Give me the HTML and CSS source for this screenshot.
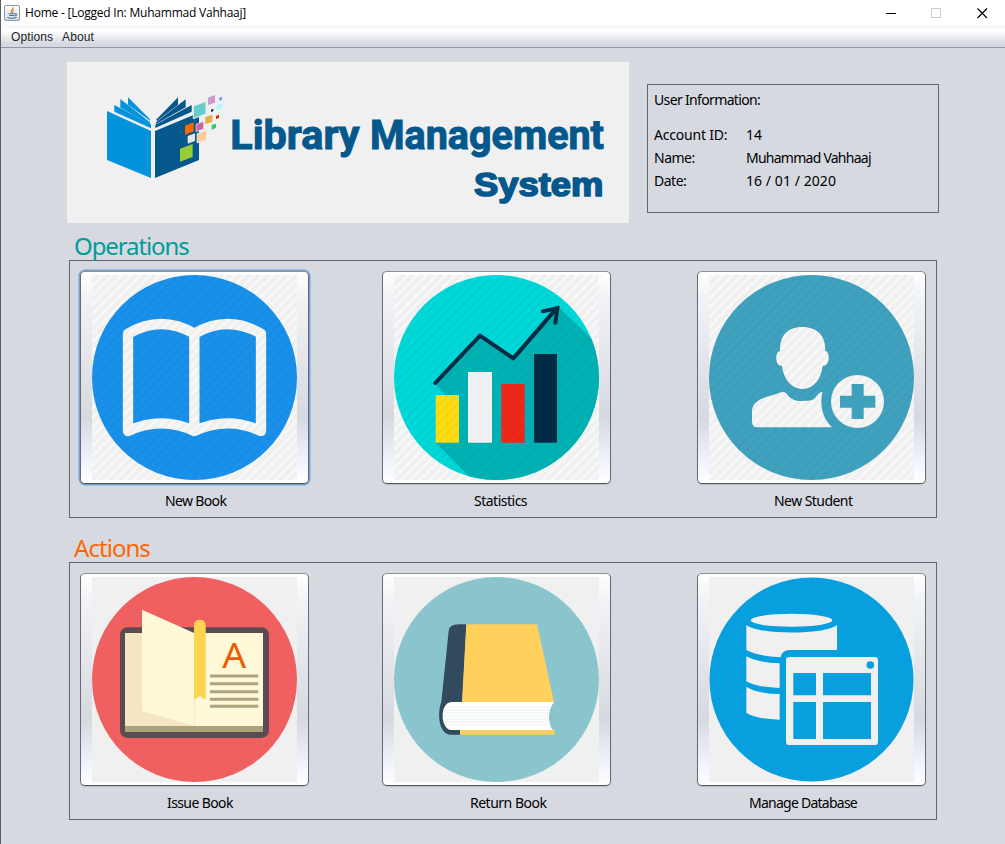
FILE: index.html
```html
<!DOCTYPE html>
<html lang="en">
<head>
<meta charset="utf-8">
<title>Home - [Logged In: Muhammad Vahhaaj]</title>
<link rel="stylesheet" href="styles.css">
</head>
<body>
<div class="window">
  <header class="titlebar">
    <svg class="java" viewBox="0 0 16 16" width="16" height="16">
      <defs><linearGradient id="jb" x2="0" y2="1"><stop stop-color="#fff"/><stop offset="1" stop-color="#d5dce3"/></linearGradient></defs>
      <rect x=".5" y=".5" width="15" height="15" rx="1.5" fill="url(#jb)" stroke="#8d9aa6"/>
      <path d="M8.9 2.2C9.5 4 6 4.600 7.600 7.800M10 4.500C8.300 5.400 8.800 6.300 8.600 7.800" fill="none" stroke="#e98324" stroke-width="1.200"/>
      <path d="M4.500 8.700h6.500M5.200 10.500h5M11 8.700c2.200-.2 1.600 2-.2 2.200M3.500 12.600c2 .9 7 .7 9-.2" fill="none" stroke="#426f99" stroke-width="1.100"/>
    </svg>
    <span class="title">Home - [Logged In: Muhammad Vahhaaj]</span>
    <svg class="controls" viewBox="0 0 105 24" width="105" height="24" fill="none" shape-rendering="crispEdges">
      <path d="M0 12.500h10" stroke="#000"/>
      <rect x="45.500" y="7.500" width="9" height="9" stroke="#ccc"/>
      <path d="M91.500 7.500l9.500 9.500M101 7.500l-9.500 9.500" stroke="#000" stroke-width="1.200" shape-rendering="auto"/>
    </svg>
  </header>
  <nav class="menubar"><span>Options</span><span>About</span></nav>
  <main class="content">
    <div class="top">
      <svg class="banner" viewBox="21 21 1686 483" width="562" height="161">
        <rect x="21" y="21" width="1686" height="483" fill="#f0f0f0"/>
        <g fill="#0392dc">
          <path d="M141 168L273 228V369L141 315z"/>
          <path d="M163 150L273 208V220L163 170z"/>
          <path d="M181 132L270 202V207L181 158z"/>
          <path d="M204 127L270 193V197L204 149z"/>
        </g>
        <g fill="#04588b">
          <path d="M417 173L285 228V369L417 315z"/>
          <path d="M395 150L286 209V219L395 170z"/>
          <path d="M377 133L288 202V207L377 157z"/>
          <path d="M354 127L290 193V199L354 149z"/>
        </g>
        <path fill="#66cccc" stroke="#f0f0f0" stroke-width="3" d="M400 153L438 139V177L400 191z"/>
        <path fill="#ff6600" d="M375 212L401 202V229L375 239z"/>
        <path fill="#cc6699" stroke="#f0f0f0" stroke-width="2" d="M408 208L431 199V222L408 230z"/>
        <path fill="#e6e6e6" d="M383 243L405 235V258L383 266z"/>
        <path fill="#ffcc99" stroke="#f0f0f0" stroke-width="2" d="M411 236L439 226V254L411 264z"/>
        <path fill="#99cc33" d="M360 281L398 267V306L360 320z"/>
        <path fill="#cc99cc" d="M444 128L465 120V143L444 150z"/>
        <path fill="#6699ff" d="M478 128L486 125V134L478 137z"/>
        <path fill="#99ffff" d="M471 151L486 146V160L471 165z"/>
        <path fill="#003333" d="M453 164L460 161V168L453 171z"/>
        <path fill="#e0b040" d="M436 186L457 179V200L436 207z"/>
        <path fill="#cc3300" d="M468 183L477 179V189L468 192z"/>
        <path fill="#33cc66" d="M455 210L468 206V219L455 224z"/>
        <text class="logo-main" x="511" y="281" textLength="388" lengthAdjust="spacingAndGlyphs">Library</text>
        <text class="logo-main" x="930" y="281" textLength="702" lengthAdjust="spacingAndGlyphs">Management</text>
        <text class="logo-sub" x="1242" y="422" textLength="388" lengthAdjust="spacingAndGlyphs">System</text>
      </svg>
      <section class="user">
        <h2>User Information:</h2>
        <dl>
          <dt class="t-acc">Account ID:</dt><dd>14</dd>
          <dt>Name:</dt><dd class="t-name">Muhammad Vahhaaj</dd>
          <dt>Date:</dt><dd class="t-date">16 / 01 / 2020</dd>
        </dl>
      </section>
    </div>

    <h1 class="heading ops">Operations</h1>
    <section class="panel">
      <div class="card">
        <button class="tile focused">
          <svg viewBox="81 60 615 615" width="205" height="205">
            <defs>
              <pattern id="light" width="20" height="20" patternUnits="userSpaceOnUse" patternTransform="rotate(45)"><rect width="20" height="20" fill="#f0f0f0"/><rect width="7" height="20" fill="#f9f9f9"/></pattern>
              <pattern id="dark" width="20" height="20" patternUnits="userSpaceOnUse" patternTransform="rotate(45)"><rect width="6" height="20" fill="#003040" fill-opacity=".045"/></pattern>
            </defs>
            <rect x="81" y="60" width="615" height="615" fill="url(#light)"/>
            <circle cx="388.500" cy="367.500" r="307.500" fill="#1990ea"/>
            <circle cx="388.500" cy="367.500" r="307.500" fill="url(#dark)"/>
            <path d="M388 236Q289 178 189 236V528Q289 482 388 528Q488 482 588 528V236Q488 178 388 236V528" fill="none" stroke="url(#light)" stroke-width="31" stroke-linejoin="round"/>
          </svg>
        </button>
        <span class="label l1">New Book</span>
      </div>
      <div class="card">
        <button class="tile">
          <svg viewBox="72 60 615 615" width="205" height="205">
            <defs><clipPath id="c2"><circle cx="379.500" cy="367.500" r="307.500"/></clipPath></defs>
            <rect x="72" y="60" width="615" height="615" fill="url(#light)"/>
            <g clip-path="url(#c2)">
              <rect x="72" y="60" width="615" height="615" fill="#00d7d7"/>
              <path d="M196 387L330 242L430 310L566 157L700 285V700H332L198 563V420H226z" fill="#00b1b3"/>
            </g>
            <path fill="#ffdc12" d="M197 420h70v143h-70z"/>
            <path fill="url(#light)" d="M294 351h72v212h-72z"/>
            <path fill="#ef2819" d="M394 387h70v176h-70z"/>
            <path fill="#002b44" d="M492 297h69v266h-69z"/>
            <path d="M196 384L330 242L430 310L559 161" fill="none" stroke="#002b44" stroke-width="12" stroke-linecap="round" stroke-linejoin="round"/>
            <path d="M519 169L562 159L556 203" fill="none" stroke="#002b44" stroke-width="12" stroke-linecap="round"/>
            <circle cx="379.500" cy="367.500" r="307.500" fill="url(#dark)"/>
          </svg>
        </button>
        <span class="label l2">Statistics</span>
      </div>
      <div class="card">
        <button class="tile">
          <svg viewBox="72 60 615 615" width="205" height="205">
            <rect x="72" y="60" width="615" height="615" fill="url(#light)"/>
            <circle cx="379.500" cy="367.500" r="307.500" fill="#3fa1be"/>
            <circle cx="379.500" cy="367.500" r="307.500" fill="url(#dark)"/>
            <g fill="url(#light)">
              <path d="M285 288C284 243 306 216 352 216S422 243 421 288C436 290 436 333 413 333C408 374 385 402 353 402S296 374 291 333C269 333 269 290 285 288z"/>
              <path d="M201 468C202 437 238 427 264 420C280 416 286 411 294 411C306 411 308 424 320 431C330 438 341 438 353 438C384 438 386 434 397 421C401 416 406 411 412 411C403 456 415 493 441 517H218Q201 517 201 500z"/>
              <circle cx="517.500" cy="439.500" r="79.500"/>
            </g>
            <path d="M500 387h36v35h35v36h-35v34h-36v-34h-35v-36h35z" fill="#3fa1be"/>
          </svg>
        </button>
        <span class="label l3">New Student</span>
      </div>
    </section>

    <h1 class="heading act">Actions</h1>
    <section class="panel">
      <div class="card">
        <button class="tile">
          <svg viewBox="81 141 615 615" width="205" height="205">
            <rect x="81" y="141" width="615" height="615" fill="#f0f0f0"/>
            <circle cx="388.500" cy="448.500" r="307.500" fill="#f06060"/>
            <rect x="165" y="292" width="447" height="332" rx="22" fill="#5c4c52"/>
            <path fill="#a9a47c" d="M180 586h414v20H180z"/>
            <path fill="#f6e5c2" d="M180 309h208v279H180z"/>
            <path fill="#fff9d9" d="M388 309h206v279H388z"/>
            <path fill="#fff9d9" d="M231 239L389 310V588L231 543z"/>
            <path fill="#ffd250" d="M387 510V286Q387 269 404.500 269T422 286V510L404.500 498z"/>
            <path d="M435 438h145M435 461h145M435 485h145M435 508h145M435 529h145" stroke="#a9a47c" stroke-width="9"/>
            <text class="letter" x="472" y="415" textLength="72" lengthAdjust="spacingAndGlyphs">A</text>
          </svg>
        </button>
        <span class="label l4">Issue Book</span>
      </div>
      <div class="card">
        <button class="tile">
          <svg viewBox="72 51 615 615" width="205" height="205">
            <rect x="72" y="51" width="615" height="615" fill="#f0f0f0"/>
            <circle cx="379.500" cy="358.500" r="307.500" fill="#8ac5ce"/>
            <path fill="#324a5e" d="M289 193H266Q237 193 236 213L214 426C202 454 204 524 243 524H271V426H277z"/>
            <path fill="#ffd05c" d="M289 193H501L552 426H276zM270 510H554V524H270z"/>
            <path fill="#fff" d="M244 426H552C532 452 533 489 548 510H244C211 510 208 428 244 426z"/>
            <path d="M226 441h314M220 450h318M218 459h320M218 468h319M218 477h319M220 486h320M225 495h317" stroke="#e6edef" stroke-width="2.500"/>
          </svg>
        </button>
        <span class="label l5">Return Book</span>
      </div>
      <div class="card">
        <button class="tile">
          <svg viewBox="72 51 615 615" width="205" height="205">
            <rect x="72" y="51" width="615" height="615" fill="#f0f0f0"/>
            <circle cx="379.500" cy="358.500" r="306" fill="#079fde"/>
            <g fill="#f0f0f0">
              <ellipse cx="319.500" cy="181" rx="122.500" ry="19.500"/>
              <path d="M184 195C220 225 420 225 456 195V270H314Q291 271 286 292Q220 289 184 270z"/>
              <path d="M184 289Q217 308 284 310V384Q217 382 184 364z"/>
              <path d="M184 380Q217 401 284 402V479Q215 477 186 460Q184 459 184 455z"/>
              <rect x="303" y="291" width="276" height="264" rx="10"/>
            </g>
            <path fill="#079fde" d="M325 339h68v67h-68zM414 339h144v67H414zM325 426h68v111h-68zM414 426h144v111H414z"/>
            <circle cx="556" cy="315" r="11.500" fill="#079fde"/>
          </svg>
        </button>
        <span class="label l6">Manage Database</span>
      </div>
    </section>
  </main>
</div>
</body>
</html>
```
FILE: styles.css
```css
* { box-sizing: border-box; }
body { margin: 0; background: #d6d9e0; color: #000; font: 14px/20px "Noto Sans", sans-serif; }
.window { height: 844px; overflow: hidden; border-left: 1px solid #5b5d60; }
.titlebar { display: flex; align-items: center; height: 25px; padding-left: 3px; background: #fff; }
.java { flex: none; }
.title { margin-left: 5px; font: 12px/24px "Open Sans", sans-serif; letter-spacing: -.22px; white-space: nowrap; }
.controls { margin-left: auto; margin-right: 14px; }
.menubar { display: flex; gap: 9px; height: 23px; padding: 1px 0 0 10px; border-bottom: 1px solid #9396a3; background: linear-gradient(#f8f8f8, #fff 28%, #d6d9e0 85%); font: 12px/22px "Liberation Sans", sans-serif; letter-spacing: .1px; color: #222; }
.content { padding: 14px 0 0 66px; }
.top { display: flex; gap: 18px; }
.banner { display: block; flex: none; }
.user { width: 292px; height: 129px; margin-top: 22px; border: 1px solid #65666b; padding: 5px 6px; }
h2 { margin: 0 0 13px; font-size: 14px; font-weight: 400; line-height: 20px; letter-spacing: -.65px; }
dl { display: grid; grid-template-columns: 92px 1fr; margin: 0; line-height: 23px; }
dd { margin: 0; white-space: nowrap; }
dt { white-space: nowrap; letter-spacing: -.5px; }
.t-acc { letter-spacing: -.2px; }
.t-name { letter-spacing: -.75px; }
.t-date { letter-spacing: .07px; }
.heading { margin: 0 0 0 7px; height: 37px; font-size: 24px; line-height: 45px; font-weight: 400; letter-spacing: -1.1px; white-space: nowrap; }
.ops { color: #009c99; }
.act { height: 44px; padding-top: 7px; letter-spacing: -.95px; color: #ff6600; }
.panel { display: grid; grid-template-columns: 302px 315px 229px; width: 868px; height: 258px; margin-left: 2px; padding: 10px 0 0 10px; border: 1px solid #65666b; }
.tile { display: flex; align-items: flex-start; justify-content: flex-start; width: 229px; height: 213px; padding: 3px 0 0 11px; border: 1px solid; border-color: #8d9299 #686b73 #505258; border-radius: 5px; background: linear-gradient(#fff, #f2f3f6 12%, #d6d9e0 69%, #f3f6ff 92%, #fff); box-shadow: 0 1px 1px #bbbfc6; }
.tile svg { display: block; flex: none; }
.focused { box-shadow: 0 0 0 1.500px #73a4d1; }
.label { display: block; margin-top: 7px; white-space: nowrap; }
.l1 { margin-left: 85px; letter-spacing: -.65px; }
.l2 { margin-left: 92px; letter-spacing: -.5px; }
.l3 { margin-left: 77px; letter-spacing: -.55px; }
.l4 { margin-left: 87px; letter-spacing: -.6px; }
.l5 { margin-left: 88px; letter-spacing: -.5px; }
.l6 { margin-left: 52px; letter-spacing: -.75px; }
.logo-main { font: 700 122px Roboto, sans-serif; fill: #04588b; stroke: #04588b; stroke-width: 3px; }
.logo-sub { font: 700 98px "Liberation Sans", sans-serif; fill: #04588b; stroke: #04588b; stroke-width: 5px; stroke-linejoin: round; }
.letter { font: 106px "Noto Sans", sans-serif; fill: #f15a00; }
```
